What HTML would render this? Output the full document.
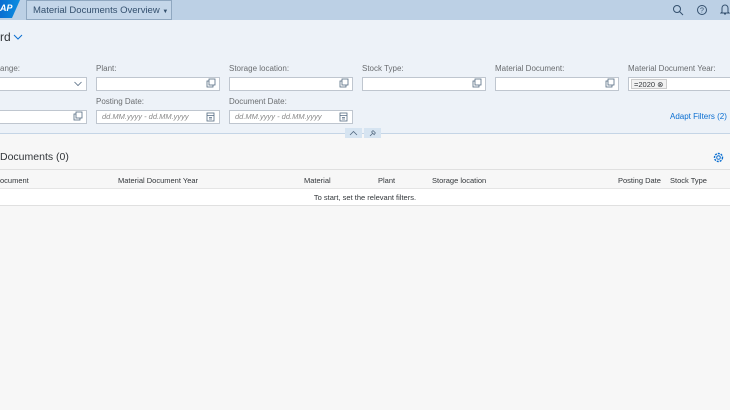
<!DOCTYPE html>
<html><head><style>
*{box-sizing:border-box;margin:0;padding:0}
body{width:730px;height:410px;overflow:hidden;background:#f7f7f7;font-family:"Liberation Sans",sans-serif;color:#32363a;position:relative}
.a{position:absolute}
.shell{left:0;top:0;width:730px;height:20px;background:#bcd0e5}
.hdr{left:0;top:20px;width:730px;height:113px;background:#edf2f8}
.lbl{font-size:8px;color:#6a6d70}
.inp{height:14px;background:#fff;border:1px solid #bfc6cf}
.ph{font-size:7.5px;color:#888;font-style:italic;line-height:12px;padding-left:5px}
.th{font-size:7.5px;color:#32363a;top:176px}
</style></head><body>
<div class="a shell"></div>
<div class="a" style="left:0;top:0;width:20px;height:18px;background:linear-gradient(90deg,#0a6ed1,#0a8ee1);clip-path:polygon(0 0,100% 0,60% 100%,0 100%)"></div>
<div class="a" style="left:0;top:3px;font-size:9px;font-weight:bold;color:#fff;font-style:italic">AP</div>
<div class="a" style="left:26px;top:0;width:146px;height:20px;border:1px solid #8fa7c0;background:#c4d6e9;font-size:9.5px;color:#34506e;padding:4px 0 0 6px">Material Documents Overview <span style="font-size:6px">▼</span></div>
<svg class="a" style="left:672px;top:4px" width="12" height="12"><circle cx="5" cy="5" r="3.5" fill="none" stroke="#34506e" stroke-width="1"/><path d="M7.5 7.5L11 11" stroke="#34506e"/></svg>
<svg class="a" style="left:696px;top:4px" width="12" height="12"><circle cx="6" cy="6" r="4.5" fill="none" stroke="#34506e"/><text x="4" y="8.5" font-size="7" fill="#34506e" font-family="Liberation Sans">?</text></svg>
<svg class="a" style="left:720px;top:3px" width="10" height="12"><path d="M2 9V5a3 3 0 016 0v4l1 1H1zM4 11h2" fill="none" stroke="#34506e"/></svg>
<div class="a hdr"></div>
<div class="a" style="left:0;top:30px;font-size:12px;color:#32363a">rd</div>
<svg class="a" style="left:13px;top:33px" width="10" height="8"><path d="M1 2l4 4 4-4" fill="none" stroke="#0a6ed1" stroke-width="1"/></svg>

<div class="a lbl" style="left:0;top:64px">ange:</div>
<div class="a inp" style="left:-5px;top:77px;width:92px"></div>
<svg class="a" style="left:74px;top:81px" width="8" height="6"><path d="M0.5 1l3.5 3.5L7.5 1" fill="none" stroke="#556b82" stroke-width="0.8"/></svg>
<div class="a lbl" style="left:96px;top:64px">Plant:</div>
<div class="a inp" style="left:96px;top:77px;width:124px"></div>
<div class="a lbl" style="left:229px;top:64px">Storage location:</div>
<div class="a inp" style="left:229px;top:77px;width:124px"></div>
<div class="a lbl" style="left:362px;top:64px">Stock Type:</div>
<div class="a inp" style="left:362px;top:77px;width:124px"></div>
<div class="a lbl" style="left:495px;top:64px">Material Document:</div>
<div class="a inp" style="left:495px;top:77px;width:124px"></div>
<div class="a lbl" style="left:628px;top:64px">Material Document Year:</div>
<div class="a inp" style="left:628px;top:77px;width:110px"></div>
<div class="a" style="left:631px;top:79px;width:36px;height:10px;background:#f2f2f2;border:1px solid #ccc;font-size:7.5px;line-height:9px;padding-left:2px">=2020 ⊗</div>

<div class="a inp" style="left:-5px;top:110px;width:92px"></div>
<div class="a lbl" style="left:96px;top:97px">Posting Date:</div>
<div class="a inp ph" style="left:96px;top:110px;width:124px">dd.MM.yyyy - dd.MM.yyyy</div>
<div class="a lbl" style="left:229px;top:97px">Document Date:</div>
<div class="a inp ph" style="left:229px;top:110px;width:124px">dd.MM.yyyy - dd.MM.yyyy</div>
<div class="a" style="left:670px;top:112px;font-size:8px;color:#0a6ed1">Adapt Filters (2)</div>

<svg class="a" width="730" height="130" style="left:0;top:0">
<g fill="none" stroke="#556b82" stroke-width="0.8">
<rect x="74" y="114" width="6" height="6"/><rect x="76" y="112" width="6" height="6" fill="#fff"/>
<rect x="207" y="81" width="6" height="6"/><rect x="209" y="79" width="6" height="6" fill="#fff"/>
<rect x="340" y="81" width="6" height="6"/><rect x="342" y="79" width="6" height="6" fill="#fff"/>
<rect x="473" y="81" width="6" height="6"/><rect x="475" y="79" width="6" height="6" fill="#fff"/>
<rect x="606" y="81" width="6" height="6"/><rect x="608" y="79" width="6" height="6" fill="#fff"/>
<rect x="207" y="113" width="7" height="8"/><path d="M207 115.5h7M209 117.5h3M209 119h3"/>
<rect x="340" y="113" width="7" height="8"/><path d="M340 115.5h7M342 117.5h3M342 119h3"/>
</g></svg>

<div class="a" style="left:0;top:133px;width:730px;height:1px;background:#c5d5e6"></div>
<div class="a" style="left:345px;top:128px;width:17px;height:10px;background:#d6e4f1"></div>
<svg class="a" style="left:349px;top:130px" width="9" height="6"><path d="M1 5l3.5-3.5L8 5" fill="none" stroke="#556b82" stroke-width="0.8"/></svg>
<div class="a" style="left:364px;top:128px;width:17px;height:10px;background:#d6e4f1"></div>
<svg class="a" style="left:368px;top:129px" width="9" height="8"><path d="M2 7l2.5-2.5M3.5 3l3 3M5 1.5l2.5 2.5M5 1.5L3.5 3M7.5 4L6 5.5" fill="none" stroke="#556b82" stroke-width="0.8"/></svg>

<div class="a" style="left:0;top:151px;font-size:10.5px;color:#32363a">Documents (0)</div>
<svg class="a" style="left:713px;top:152px" width="11" height="11"><circle cx="5.5" cy="5.5" r="4" fill="none" stroke="#0a6ed1" stroke-width="1.4" stroke-dasharray="2 1"/><circle cx="5.5" cy="5.5" r="1.8" fill="none" stroke="#0a6ed1"/></svg>
<div class="a" style="left:0;top:169px;width:730px;height:1px;background:#e0e0e0"></div>
<div class="a th" style="left:0">ocument</div>
<div class="a th" style="left:118px">Material Document Year</div>
<div class="a th" style="left:304px">Material</div>
<div class="a th" style="left:378px">Plant</div>
<div class="a th" style="left:432px">Storage location</div>
<div class="a th" style="left:618px">Posting Date</div>
<div class="a th" style="left:670px">Stock Type</div>
<div class="a" style="left:0;top:188px;width:730px;height:18px;background:#fff;border-top:1px solid #e5e5e5;border-bottom:1px solid #e0e0e0;font-size:7.5px;text-align:center;line-height:17px">To start, set the relevant filters.</div>
</body></html>
